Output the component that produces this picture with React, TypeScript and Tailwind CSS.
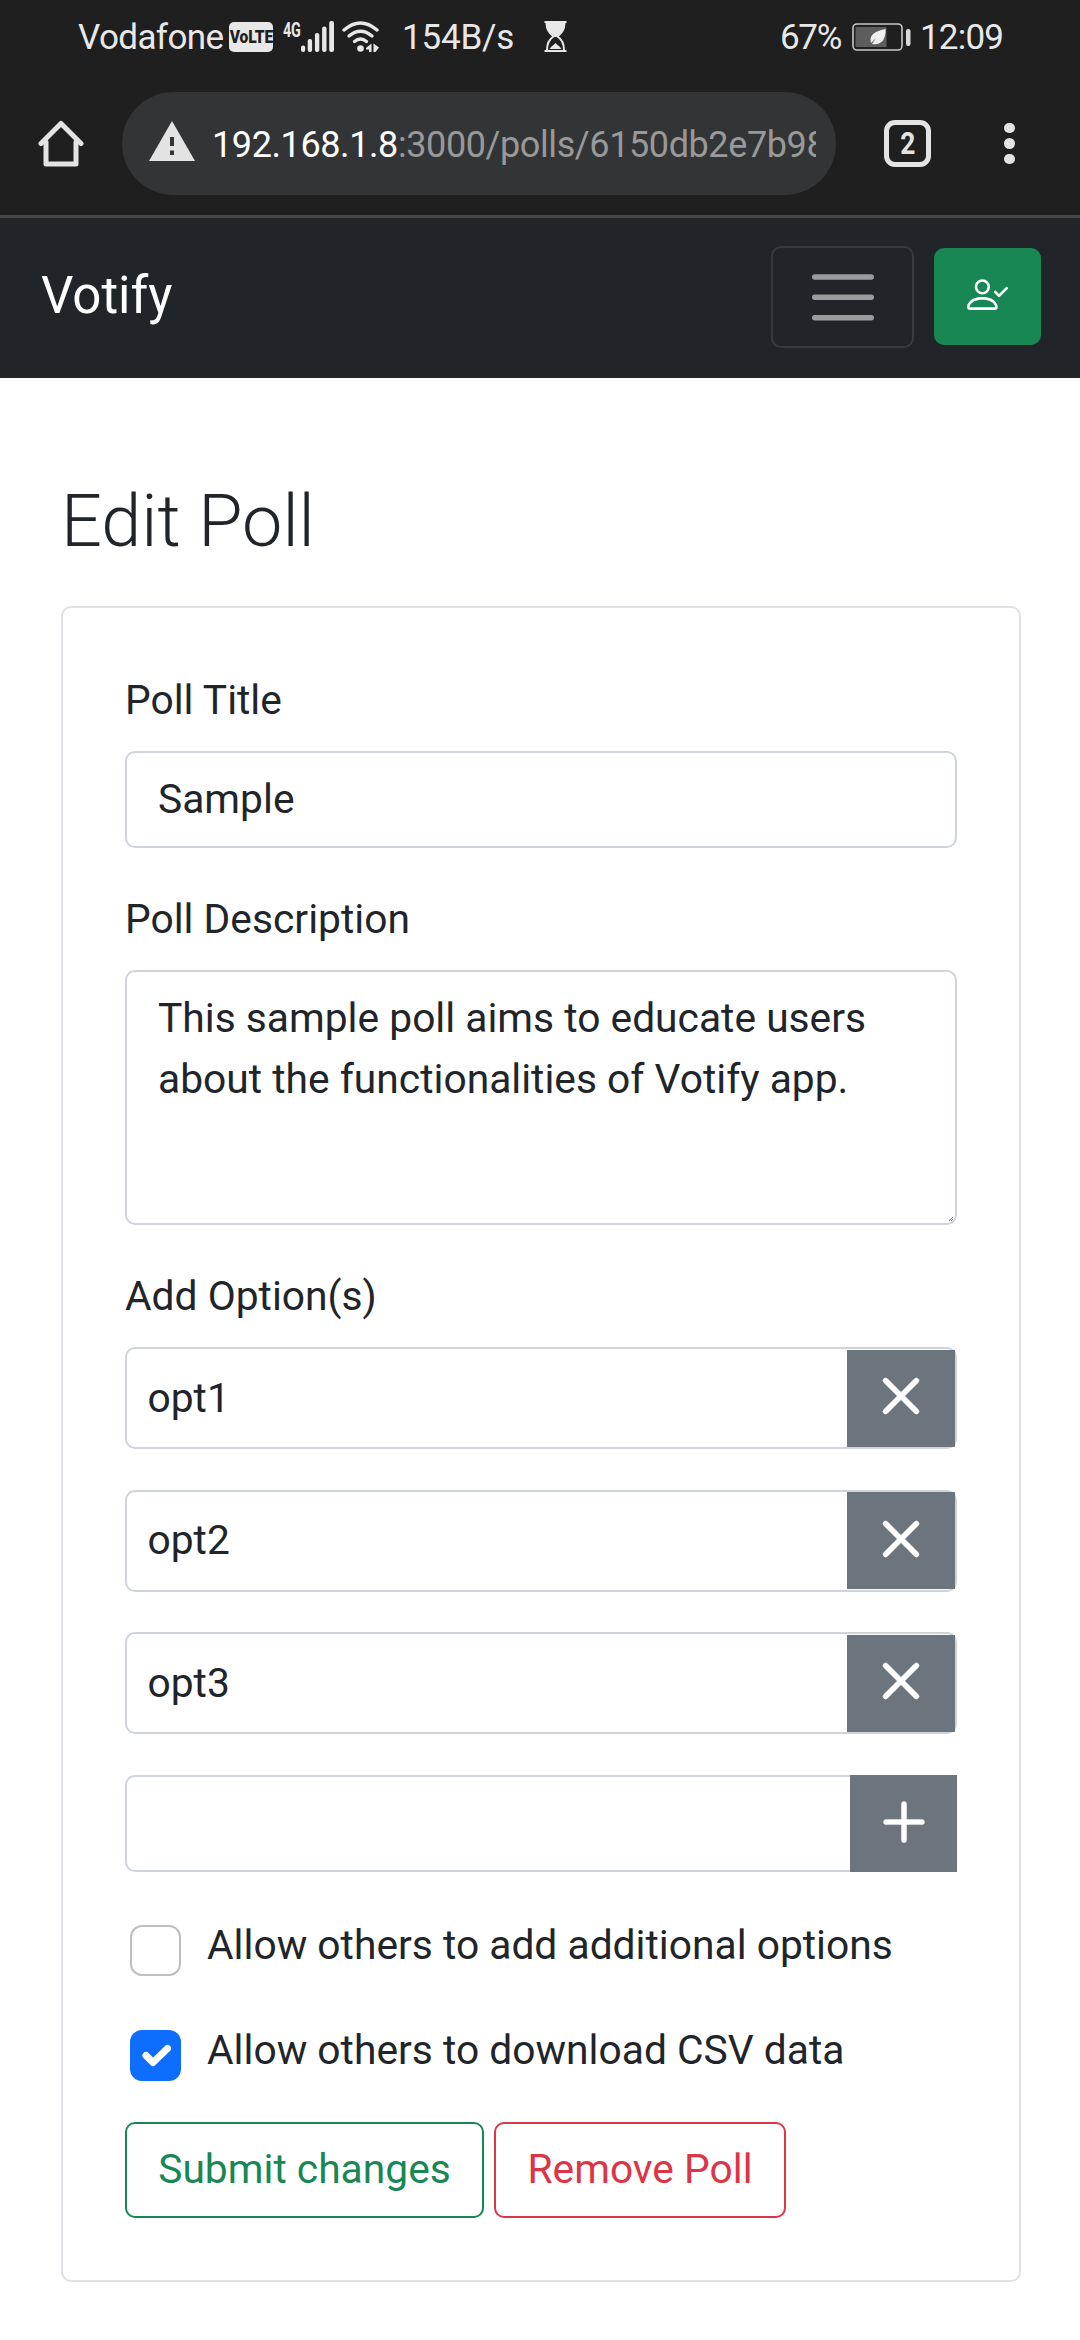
import React from 'react';
import { BsPlus, BsX } from 'react-icons/bs';

function StatusBar() {
  return (
    <div className="flex h-[76px] items-center bg-[#1f1f1f] pl-[78px] pr-[77px] text-[35px] leading-[42px] tracking-[-0.2px] text-[#e8e8e8]">
      <span className="w-[151px] shrink-0 whitespace-nowrap tracking-[-0.600px]">Vodafone</span>
      <span className="mt-[-3px] flex h-[30px] w-[44px] shrink-0 items-center justify-center rounded-[5px] bg-[#e8e8e8]">
        <span className="inline-block scale-x-[0.82] text-[19px] font-black leading-none tracking-[-0.200px] text-[#1f1f1f]">VoLTE</span>
      </span>
      <span className="mt-[-17px] ml-[10px] w-[18px] shrink-0 text-[20px] font-bold leading-none">
        <span className="inline-block origin-left scale-x-[0.72]">4G</span>
      </span>
      <svg className="mt-[-3px] h-[31px] w-[34px] shrink-0" viewBox="0 0 34 31" fill="currentColor">
        <rect x="0" y="24.5" width="4.2" height="6.5" rx="2" />
        <rect x="6.7" y="18" width="4.4" height="13" rx="2" />
        <rect x="13.9" y="12" width="4.4" height="19" rx="2" />
        <rect x="21.1" y="5.5" width="4.4" height="25.5" rx="2" />
        <rect x="28.2" y="0" width="4.8" height="31" rx="2" />
      </svg>
      <svg className="mt-[-3px] ml-[7px] h-[31px] w-[38px] shrink-0" viewBox="0 0 38 31" fill="none" stroke="currentColor" strokeWidth="3.4" strokeLinecap="round">
        <path d="M2 9Q18.500 -5 35 9" />
        <path d="M7 15Q18.500 5.500 30 15" />
        <path d="M12.500 20.500Q18.500 15.500 24.500 20.500" />
        <circle cx="18.500" cy="27.500" r="3.300" fill="currentColor" stroke="none" />
        <path d="M24 27L29.500 22.500V31H27V28.500H24ZM31.500 22.500L37 26.500L33.500 31H31.500Z" fill="currentColor" stroke="none" />
      </svg>
      <span className="ml-[22px] w-[114px] shrink-0 whitespace-nowrap">154B/s</span>
      <svg className="mt-[-3px] ml-[28px] h-[31px] w-[23px] shrink-0" viewBox="0 0 22 31" fill="none" stroke="currentColor" strokeWidth="2">
        <path d="M0 1H22M0 30H22" />
        <path d="M2 2H20C20 9 17 12 13 15.500C17 18 19.500 22 19.500 29M2 2C2 9 5 12 9 15.500C5 18 2.500 22 2.500 29" />
        <path d="M2 2H20C20 9 16 12 11.500 16H10.500C6 12 2 9 2 2ZM5 28Q7 25 9 24L11 22L13 24Q15 25 17 28Z" fill="currentColor" stroke="none" />
      </svg>
      <span className="ml-auto w-[72px] shrink-0 whitespace-nowrap tracking-[-1.300px]">67%</span>
      <svg className="mt-[-3px] h-[30px] w-[68px] shrink-0" viewBox="0 0 68 30">
        <rect x="1" y="2" width="49" height="26" rx="4" fill="none" stroke="#c8c8c8" strokeWidth="1.6" />
        <rect x="3.500" y="5" width="31" height="20" fill="#5d5d5d" />
        <path d="M33.500 7C24 9 18.500 12 18.500 18L19 21L24 16L20 22Q30 24 33 14Q34 10 33.500 7Z" fill="#eee" />
        <rect x="54" y="7" width="4.500" height="17" rx="2" fill="#d8d8d8" />
      </svg>
      <span className="w-[83px] shrink-0 whitespace-nowrap tracking-[-0.800px]">12:09</span>
    </div>
  );
}

function BrowserBar() {
  return (
    <div className="flex h-[142px] items-center border-b-[3px] border-[#454746] bg-[#1f1f1f] pb-[4px] text-[#e3e3e3]">
      <svg className="ml-[38px] h-[47px] w-[46px] shrink-0" viewBox="0 0 46 47" fill="none" stroke="currentColor" strokeWidth="5" strokeLinecap="round" strokeLinejoin="round">
        <path d="M8 22V44H38V22" />
        <path d="M3 23.500L23 3.500L43 23.500" />
      </svg>
      <div className="ml-[38px] flex h-[103px] w-[714px] shrink-0 items-center rounded-full bg-[#333436] pl-[27px]">
        <svg className="mt-[-5px] h-[40px] w-[46px] shrink-0" viewBox="0 0 46 40">
          <path d="M23 0L46 40H0Z" fill="#e3e3e3" />
          <path d="M21 16H25V25H21ZM21 29.500H25V34H21Z" fill="#333436" />
        </svg>
        <div className="mt-[2px] ml-[17px] w-[604px] shrink-0 overflow-hidden whitespace-nowrap text-[36px] leading-[50px] tracking-[-0.400px] text-[#989998]">
          <span className="text-white">192.168.1.8</span>:3000/polls/6150db2e7b98
        </div>
      </div>
      <div className="ml-[48px] flex h-[47px] w-[47px] shrink-0 items-center justify-center rounded-[11px] border-[5px] border-[#e3e3e3] text-[31px] font-bold leading-none">
        <span className="inline-block scale-x-[0.85]">2</span>
      </div>
      <div className="ml-[73px] flex flex-col gap-[4.800px]">
        <i className="size-[10.500px] rounded-full bg-[#e3e3e3]" />
        <i className="size-[10.500px] rounded-full bg-[#e3e3e3]" />
        <i className="size-[10.500px] rounded-full bg-[#e3e3e3]" />
      </div>
    </div>
  );
}

function Navbar() {
  return (
    <nav className="flex h-[160px] items-center bg-[#212529] pr-[39px] pb-[2px] pl-[41px] text-white">
      <span className="mt-[-3px] text-[51px] leading-[76px]">Votify</span>
      <button className="ml-auto flex h-[102px] w-[143px] items-center justify-center rounded-[10px] border-2 border-[#373b3e]">
        <svg className="h-[47px] w-[62px]" viewBox="0 0 62 47" stroke="#9b9c9e" strokeWidth="5.400" strokeLinecap="round">
          <path d="M2.700 3H59.300M2.700 23.300H59.300M2.700 43.700H59.300" />
        </svg>
      </button>
      <button className="mt-[-1px] ml-[20px] flex h-[97px] w-[107px] items-center justify-center rounded-[10px] bg-[#198754] pb-[4px]">
        <svg className="size-[41px]" viewBox="0 0 16 16" fill="currentColor">
          <path d="M6 8a3 3 0 1 0 0-6 3 3 0 0 0 0 6zm2-3a2 2 0 1 1-4 0 2 2 0 0 1 4 0zm4 8c0 1-1 1-1 1H1s-1 0-1-1 1-4 6-4 6 3 6 4zm-1-.004c-.001-.246-.154-.986-.832-1.664C9.516 10.680 8.289 10 6 10c-2.290 0-3.516.680-4.168 1.332-.678.678-.830 1.418-.832 1.664h10z" />
          <path d="M15.854 5.146a.5.5 0 0 1 0 .708l-3 3a.5.5 0 0 1-.708 0l-1.500-1.500a.5.5 0 0 1 .708-.708L12.500 7.793l2.646-2.647a.5.5 0 0 1 .708 0z" />
        </svg>
      </button>
    </nav>
  );
}

function OptionRow({ name }: { name: string }) {
  return (
    <div className="mb-[40.600px] flex h-[102px] items-center rounded-[10px] border-2 border-[#ced4da] pl-[20.500px]">
      <span className="flex-1">{name}</span>
      <button className="flex h-[97px] w-[108px] items-center justify-center bg-[#6c757d] pb-[4px] text-white">
        <BsX className="size-[82px] shrink-0" stroke="currentColor" strokeWidth="0.12" />
      </button>
    </div>
  );
}

export default function App() {
  return (
    <div className="h-[2340px] w-[1080px] overflow-hidden bg-white font-['Roboto',sans-serif] text-[40.750px] leading-[61px] text-[#212529]">
      <StatusBar />
      <BrowserBar />
      <Navbar />
      <main className="pt-[98px] pr-[59px] pl-[61px]">
        <h1 className="h-[130px] pt-[2px] text-[72px] leading-[88px] font-light">Edit Poll</h1>
        <section className="h-[1676px] rounded-[10px] border-2 border-[#dee2e6] px-[62px] pt-[62px]">
          <label className="mb-[20px] block">Poll Title</label>
          <div className="mb-[41px] flex h-[97px] items-center rounded-[10px] border-2 border-[#ced4da] px-[31px]">Sample</div>
          <label className="mb-[20px] block">Poll Description</label>
          <div className="relative mb-[41px] h-[255px] rounded-[10px] border-2 border-[#ced4da] px-[31px] pt-[16px]">
            This sample poll aims to educate users about the functionalities of Votify app.
            <svg className="absolute right-[2px] bottom-[2px] size-[4px]" viewBox="0 0 4 4" stroke="#444" strokeWidth="0.700">
              <path d="M0 4L4 0M2 4L4 2" />
            </svg>
          </div>
          <label className="mb-[20px] block">Add Option(s)</label>
          <OptionRow name="opt1" />
          <OptionRow name="opt2" />
          <OptionRow name="opt3" />
          <div className="flex h-[97px]">
            <div className="flex-1 rounded-l-[10px] border-2 border-r-0 border-[#ced4da]" />
            <button className="flex w-[107px] items-center justify-center bg-[#6c757d] pb-[3px] text-white">
              <BsPlus className="size-[82px] shrink-0" stroke="currentColor" strokeWidth="0.08" />
            </button>
          </div>
          <div className="mt-[42px] flex h-[61px] pl-[5px]">
            <span className="mt-[11px] size-[51px] rounded-[12px] border-2 border-[#bfbfbf]" />
            <span className="mt-px ml-[26px]">Allow others to add additional options</span>
          </div>
          <div className="mt-[44px] flex h-[61px] pl-[5px]">
            <span className="mt-[11px] size-[51px] rounded-[12px] bg-[#0d6efd]">
              <svg className="size-[51px]" viewBox="0 0 51 51" fill="none" stroke="white" strokeWidth="7" strokeLinecap="round" strokeLinejoin="round">
                <path d="M16 25.500L23 32.500L37.500 18.500" />
              </svg>
            </span>
            <span className="mt-px ml-[26px]">Allow others to download CSV data</span>
          </div>
          <div className="mt-[42px] flex h-[96px] gap-[10px]">
            <button className="w-[359px] rounded-[10px] border-2 border-[#198754] pb-px text-[#198754]">Submit changes</button>
            <button className="w-[292px] rounded-[10px] border-2 border-[#dc3545] pb-px text-[#dc3545]">Remove Poll</button>
          </div>
        </section>
      </main>
    </div>
  );
}
